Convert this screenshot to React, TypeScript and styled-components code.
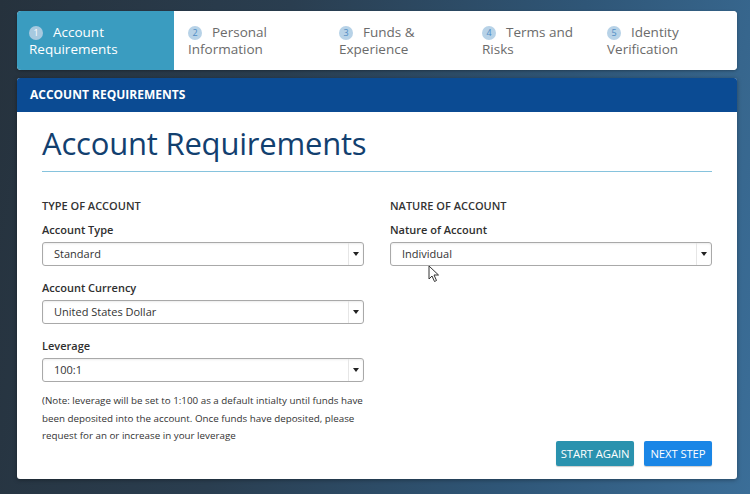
import styled, { createGlobalStyle } from "styled-components";

const GlobalStyle = createGlobalStyle`
  html, body {
    margin: 0;
    padding: 0;
  }
  body {
    font-family: "Open Sans", "Liberation Sans", sans-serif;
    background: #2b3f50;
  }
`;

const Page = styled.div`
  position: relative;
  width: 750px;
  height: 494px;
  box-sizing: border-box;
  padding: 11px 13px 0 17px;
  background: linear-gradient(100deg, #26323d 0%, #2a3e50 35%, #2f5677 70%, #3b6e98 100%);
  overflow: hidden;
`;

const Stepper = styled.div`
  display: flex;
  height: 59px;
  background: #ffffff;
  border-radius: 4px;
  overflow: hidden;
  box-shadow: 0 1px 3px rgba(0, 0, 0, 0.3);
`;

const Step = styled.div<{ $w?: number; $active?: boolean }>`
  flex: ${(p) => (p.$w ? `0 0 ${p.$w}px` : "1 1 auto")};
  box-sizing: border-box;
  padding: 13px 0 0 ${(p) => (p.$active ? 12 : 14)}px;
  background: ${(p) => (p.$active ? "#3a9cc0" : "#ffffff")};
  color: ${(p) => (p.$active ? "#ffffff" : "#6b6b6b")};
  font-size: 13.5px;
  line-height: 17px;
`;

const StepLine = styled.span`
  display: block;
  height: 17px;
  white-space: nowrap;
`;

const Num = styled.span<{ $active?: boolean }>`
  display: inline-block;
  width: 14px;
  height: 14px;
  margin-right: 10px;
  border-radius: 50%;
  background: ${(p) => (p.$active ? "#a7c9df" : "#b7d2e7")};
  color: ${(p) => (p.$active ? "#ffffff" : "#4f8cc4")};
  font-size: 9px;
  line-height: 14px;
  text-align: center;
  vertical-align: 1px;
`;

const Panel = styled.div`
  margin-top: 8px;
  background: #ffffff;
  border-radius: 3px;
  overflow: hidden;
  box-shadow: 0 1px 4px rgba(0, 0, 0, 0.35);
`;

const PanelHeader = styled.div`
  height: 34px;
  box-sizing: border-box;
  padding: 10px 13px 0;
  background: #0b4b93;
  color: #ffffff;
  font-size: 12px;
  font-weight: 700;
  line-height: 14px;
`;

const PanelBody = styled.div`
  height: 367px;
  box-sizing: border-box;
  padding: 13px 25px 13px;
  display: flex;
  flex-direction: column;
`;

const Title = styled.h1`
  margin: 0;
  padding-bottom: 10px;
  border-bottom: 1px solid #86c3dd;
  color: #12406f;
  font-size: 31px;
  font-weight: 400;
  line-height: 36px;
  letter-spacing: -0.2px;
`;

const Columns = styled.div`
  flex: 1;
  display: grid;
  grid-template-columns: 1fr 1fr;
  column-gap: 26px;
  padding-top: 27px;
`;

const Column = styled.div`
  display: flex;
  flex-direction: column;
`;

const SectionHead = styled.div`
  color: #333333;
  font-size: 11px;
  font-weight: 600;
  line-height: 14px;
  margin-bottom: 10px;
`;

const Label = styled.div`
  color: #2f2f2f;
  font-size: 11px;
  font-weight: 600;
  line-height: 14px;
  margin-bottom: 5px;
`;

const Select = styled.div`
  display: flex;
  height: 24px;
  box-sizing: border-box;
  border: 1px solid #a9a9a9;
  border-radius: 3px;
  box-shadow: inset 0 1px 2px rgba(0, 0, 0, 0.08);
  margin-bottom: 15px;
`;

const SelectValue = styled.div`
  flex: 1;
  padding-left: 11px;
  color: #333333;
  font-size: 11px;
  line-height: 22px;
`;

const Caret = styled.div`
  width: 14px;
  border-left: 1px solid #e6e6e6;
  display: flex;
  align-items: center;
  justify-content: center;
  &::after {
    content: "";
    border-left: 3px solid transparent;
    border-right: 3px solid transparent;
    border-top: 4px solid #222222;
  }
`;

const Note = styled.p`
  margin: 0;
  margin-top: -5px;
  color: #333333;
  font-size: 9.8px;
  line-height: 17.5px;
`;

const Buttons = styled.div`
  margin-top: auto;
  display: flex;
  justify-content: flex-end;
  gap: 10px;
`;

const Button = styled.button<{ $tone: string; $pad: number }>`
  height: 25px;
  padding: 0 ${(p) => p.$pad}px;
  border: none;
  border-radius: 2px;
  background: ${(p) => p.$tone};
  color: #ffffff;
  font-family: "Open Sans", "Liberation Sans", sans-serif;
  font-size: 11.3px;
  font-weight: 500;
  letter-spacing: -0.1px;
  box-shadow: 0 1px 1px rgba(0, 0, 0, 0.2);
`;

const Cursor = styled.svg`
  position: absolute;
  left: 428px;
  top: 265px;
`;

const steps = [
  { n: 1, a: "Account", b: "Requirements", w: 157 },
  { n: 2, a: "Personal", b: "Information", w: 151 },
  { n: 3, a: "Funds &", b: "Experience", w: 143 },
  { n: 4, a: "Terms and", b: "Risks", w: 125 },
  { n: 5, a: "Identity", b: "Verification" },
];

function Field({ label, value }: { label: string; value: string }) {
  return (
    <>
      <Label>{label}</Label>
      <Select>
        <SelectValue>{value}</SelectValue>
        <Caret />
      </Select>
    </>
  );
}

export default function App() {
  return (
    <Page>
      <GlobalStyle />
      <Stepper>
        {steps.map((s) => (
          <Step key={s.n} $w={s.w} $active={s.n === 1}>
            <StepLine>
              <Num $active={s.n === 1}>{s.n}</Num>
              {s.a}
            </StepLine>
            <StepLine>{s.b}</StepLine>
          </Step>
        ))}
      </Stepper>
      <Panel>
        <PanelHeader>ACCOUNT REQUIREMENTS</PanelHeader>
        <PanelBody>
          <Title>Account Requirements</Title>
          <Columns>
            <Column>
              <SectionHead>TYPE OF ACCOUNT</SectionHead>
              <Field label="Account Type" value="Standard" />
              <Field label="Account Currency" value="United States Dollar" />
              <Field label="Leverage" value="100:1" />
              <Note>
                (Note: leverage will be set to 1:100 as a default intialty until funds have been
                deposited into the account. Once funds have deposited, please request for an or
                increase in your leverage
              </Note>
            </Column>
            <Column>
              <SectionHead>NATURE OF ACCOUNT</SectionHead>
              <Field label="Nature of Account" value="Individual" />
              <Buttons>
                <Button $tone="#2a92ae" $pad={4.5}>START AGAIN</Button>
                <Button $tone="#1a86e6" $pad={6.5}>NEXT STEP</Button>
              </Buttons>
            </Column>
          </Columns>
        </PanelBody>
      </Panel>
      <Cursor width="12" height="18" viewBox="0 0 12 18">
        <path d="M1 1 L1 14 L4 11 L6.5 16.5 L8.5 15.5 L6 10 L10.5 10 Z" fill="#ffffff" stroke="#333" strokeWidth="1" strokeLinejoin="round" />
      </Cursor>
    </Page>
  );
}
